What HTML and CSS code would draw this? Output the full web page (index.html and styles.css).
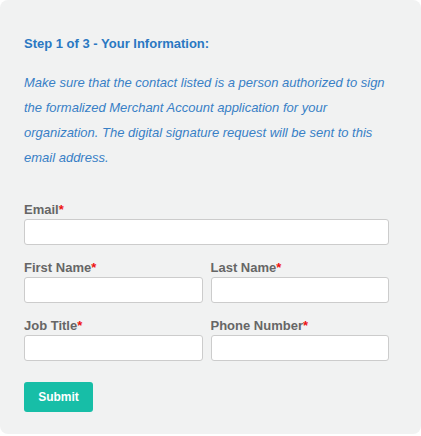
FILE: index.html
```html
<!DOCTYPE html>
<html lang="en">
<head>
<meta charset="utf-8">
<title>Step 1 of 3</title>
<link rel="stylesheet" href="styles.css">
</head>
<body>
<div class="card">
  <h2 class="step-title">Step 1 of 3 - Your Information:</h2>
  <p class="intro">Make sure that the contact listed is a person authorized to sign the formalized Merchant Account application for your organization. The digital signature request will be sent to this email address.</p>
  <form class="form">
    <div class="field">
      <label class="label">Email<span class="req">*</span></label>
      <input class="input" type="text">
    </div>
    <div class="row">
      <div class="field">
        <label class="label">First Name<span class="req">*</span></label>
        <input class="input" type="text">
      </div>
      <div class="field">
        <label class="label">Last Name<span class="req">*</span></label>
        <input class="input" type="text">
      </div>
    </div>
    <div class="row">
      <div class="field">
        <label class="label">Job Title<span class="req">*</span></label>
        <input class="input" type="text">
      </div>
      <div class="field">
        <label class="label">Phone Number<span class="req">*</span></label>
        <input class="input" type="text">
      </div>
    </div>
    <div class="actions">
      <button class="submit" type="button">Submit</button>
    </div>
  </form>
</div>
</body>
</html>
```
FILE: styles.css
```css
html, body {
  margin: 0;
  padding: 0;
  background: #ffffff;
}
body {
  font-family: "Liberation Sans", Arial, Helvetica, sans-serif;
}
.card {
  box-sizing: border-box;
  width: 421px;
  height: 434px;
  background: #f1f2f2;
  border-radius: 8px;
  padding: 36px 32px 0 24px;
}
.step-title {
  margin: 0;
  font-size: 13px;
  line-height: 16px;
  font-weight: bold;
  color: #2a78c2;
}
.intro {
  margin: 18px 0 0;
  font-size: 13px;
  line-height: 25px;
  font-style: italic;
  color: #3880c6;
}
.form {
  margin-top: 32px;
  display: flex;
  flex-direction: column;
  gap: 15px;
}
.row {
  display: grid;
  grid-template-columns: 1fr 1fr;
  gap: 8px;
}
.field {
  display: flex;
  flex-direction: column;
  gap: 1px;
}
.label {
  font-size: 13px;
  line-height: 16px;
  font-weight: bold;
  color: #666666;
}
.req {
  color: #ee1111;
}
.input {
  box-sizing: border-box;
  width: 100%;
  height: 26px;
  margin: 0;
  border: 1px solid #cccccc;
  border-radius: 3px;
  background: #ffffff;
  padding: 0 6px;
  font-family: inherit;
}
.actions {
  padding-top: 6px;
}
.submit {
  width: 69px;
  height: 30px;
  border: 0;
  border-radius: 3px;
  background: #17bea7;
  color: #ffffff;
  font-family: inherit;
  font-weight: bold;
  font-size: 12px;
  padding: 0;
}
```
